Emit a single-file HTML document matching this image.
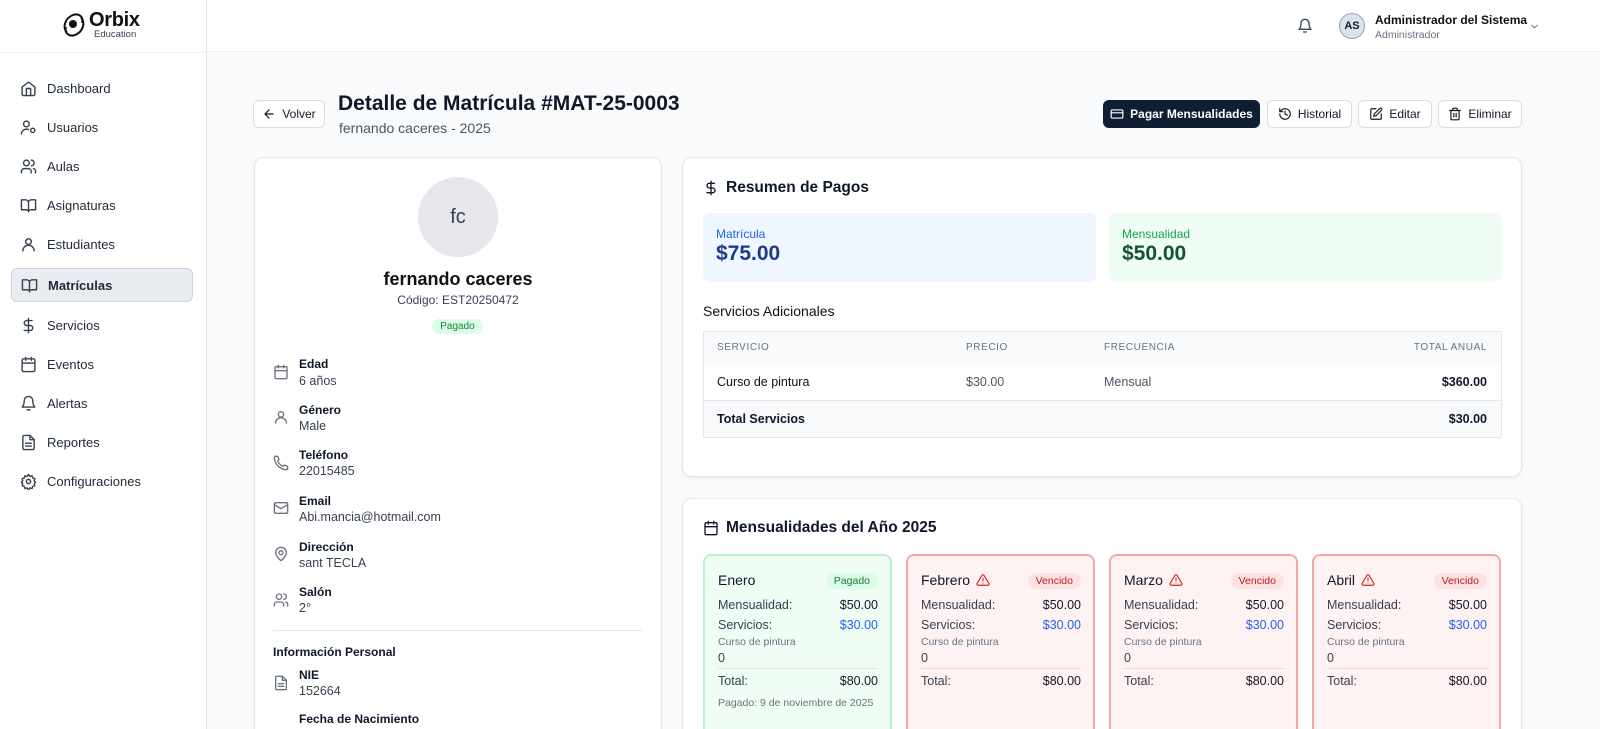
<!DOCTYPE html>
<html><head><meta charset="utf-8"><style>
*{box-sizing:border-box;margin:0;padding:0}
html{width:1600px;height:729px;overflow:hidden}
body{width:1600px;height:729px;overflow:hidden;background:#f8fafc;font-family:"Liberation Sans",Arial,sans-serif;color:#0f172a;position:relative}
.a{position:absolute}
svg.i{fill:none;stroke:currentColor;stroke-width:2;stroke-linecap:round;stroke-linejoin:round}
.side{left:0;top:0;width:207px;height:729px;background:#fff;border-right:1px solid #e5e7eb}
.nav{left:11px;width:182px;height:34px;display:flex;align-items:center;padding-left:9px;font-size:13px;color:#1f2937}
.nav svg{width:17px;height:17px;margin-right:10px;color:#374151}
.nav.act{background:#e9edf2;border:1px solid #cbd5e1;border-radius:6px;font-weight:bold}
.btn{height:28px;border:1px solid #d9dee5;border-radius:6px;background:#fff;display:flex;align-items:center;justify-content:center;font-size:12px;color:#111827;top:100px}
.btn svg{width:14px;height:14px;margin-right:6px}
.card{background:#fff;border:1px solid #e5e7eb;border-radius:10px;box-shadow:0 1px 3px rgba(0,0,0,.06)}
.lab{font-size:12px;font-weight:bold;left:299px}
.val{font-size:12.5px;color:#374151;left:299px}
.ic{left:273px;width:16px;height:16px;color:#6b7280}
.m{top:554px;width:189px;height:175px;border:2px solid #f3a8a8;border-bottom:none;background:#fef2f2;border-radius:8px 8px 0 0}
.m.g{border-color:#bbf0cd;background:#f0fdf4}
.m .t{position:absolute;left:13px;top:16px;font-size:14px;display:flex;align-items:center}
.m .t svg{width:14px;height:14px;color:#dc2626;margin-left:6px}
.bd{position:absolute;right:12px;top:17px;font-size:10.5px;padding:2px 8px;border-radius:9px;background:#fee2e2;color:#b91c1c}
.g .bd{background:#dcfce7;color:#15803d}
.r{position:absolute;left:13px;right:12px;font-size:12.5px;color:#374151;display:flex;justify-content:space-between}
.r b{color:#111827;font-weight:normal}
</style></head><body>
<div class="a side"></div>
<div class="a" style="left:207px;top:0;width:1393px;height:52px;background:#fff;border-bottom:1px solid #eceff3"></div>
<div class="a" style="left:0;top:52px;width:207px;height:1px;background:#eceff3"></div>
<svg class="a" style="left:61px;top:12px" width="26" height="26" viewBox="0 0 26 26" fill="none" stroke="#111" stroke-width="2"><path d="M6 20C1 16 4 6 12 3c6-2 11 2 9 8"/><path d="M20 6c5 4 2 14-6 17-6 2-11-2-9-8"/><circle cx="12" cy="12" r="3" fill="#111"/></svg>
<div class="a" style="left:89px;top:9px;font-size:20px;font-weight:bold;color:#111;letter-spacing:-.3px">Orbix</div>
<div class="a" style="left:94px;top:29px;font-size:9.5px;color:#374151">Education</div>
<div class="a nav" style="top:71px"><svg class="i" viewBox="0 0 24 24"><path d="M3 10l9-7 9 7v10a2 2 0 0 1-2 2H5a2 2 0 0 1-2-2z"/><path d="M9 22V12h6v10"/></svg>Dashboard</div>
<div class="a nav" style="top:110px"><svg class="i" viewBox="0 0 24 24"><circle cx="9" cy="7" r="4"/><path d="M2 21a7 7 0 0 1 10-6"/><circle cx="18" cy="16" r="3"/></svg>Usuarios</div>
<div class="a nav" style="top:149px"><svg class="i" viewBox="0 0 24 24"><circle cx="9" cy="7" r="4"/><path d="M2 21v-2a4 4 0 0 1 4-4h6a4 4 0 0 1 4 4v2"/><path d="M16 3a4 4 0 0 1 0 8M22 21v-2a4 4 0 0 0-3-4"/></svg>Aulas</div>
<div class="a nav" style="top:188px"><svg class="i" viewBox="0 0 24 24"><path d="M2 4h6a4 4 0 0 1 4 4v13a3 3 0 0 0-3-3H2zM22 4h-6a4 4 0 0 0-4 4v13a3 3 0 0 1 3-3h7z"/></svg>Asignaturas</div>
<div class="a nav" style="top:227px"><svg class="i" viewBox="0 0 24 24"><circle cx="12" cy="8" r="4"/><path d="M4 21a8 8 0 0 1 16 0"/></svg>Estudiantes</div>
<div class="a nav act" style="top:268px"><svg class="i" viewBox="0 0 24 24"><path d="M2 4h6a4 4 0 0 1 4 4v13a3 3 0 0 0-3-3H2zM22 4h-6a4 4 0 0 0-4 4v13a3 3 0 0 1 3-3h7z"/></svg>Matrículas</div>
<div class="a nav" style="top:308px"><svg class="i" viewBox="0 0 24 24"><path d="M12 2v20M17 5H9.5a3.5 3.5 0 0 0 0 7h5a3.5 3.5 0 0 1 0 7H6"/></svg>Servicios</div>
<div class="a nav" style="top:347px"><svg class="i" viewBox="0 0 24 24"><rect x="3" y="4" width="18" height="18" rx="2"/><path d="M16 2v4M8 2v4M3 10h18"/></svg>Eventos</div>
<div class="a nav" style="top:386px"><svg class="i" viewBox="0 0 24 24"><path d="M6 8a6 6 0 0 1 12 0c0 7 3 9 3 9H3s3-2 3-9M10 21h4"/></svg>Alertas</div>
<div class="a nav" style="top:425px"><svg class="i" viewBox="0 0 24 24"><path d="M14 2H6a2 2 0 0 0-2 2v16a2 2 0 0 0 2 2h12a2 2 0 0 0 2-2V8z"/><path d="M14 2v6h6M8 13h8M8 17h8"/></svg>Reportes</div>
<div class="a nav" style="top:464px"><svg class="i" viewBox="0 0 24 24"><circle cx="12" cy="12" r="3"/><path d="M12 2l2 3 3-1 1 3 3 1-1 3 2 2-2 2 1 3-3 1-1 3-3-1-2 3-2-3-3 1-1-3-3-1 1-3-2-2 2-2-1-3 3-1 1-3 3 1z"/></svg>Configuraciones</div>
<svg class="a i" style="left:1297px;top:18px;color:#374151" width="16" height="16" viewBox="0 0 24 24"><path d="M6 8a6 6 0 0 1 12 0c0 7 3 9 3 9H3s3-2 3-9M10 21h4"/></svg>
<div class="a" style="left:1339px;top:13px;width:26px;height:26px;border-radius:50%;background:#dbe2ec;border:1px solid #94a3b8;font-size:11px;font-weight:bold;display:flex;align-items:center;justify-content:center">AS</div>
<div class="a" style="left:1375px;top:13px;font-size:12px;font-weight:bold;color:#111">Administrador del Sistema</div>
<div class="a" style="left:1375px;top:29px;font-size:10.5px;color:#6b7280">Administrador</div>
<svg class="a i" style="left:1529px;top:21px;color:#6b7280" width="11" height="11" viewBox="0 0 24 24"><path d="M6 9l6 6 6-6"/></svg>
<div class="a btn" style="left:253px;width:72px"><svg class="i" viewBox="0 0 24 24"><path d="M19 12H5M12 19l-7-7 7-7"/></svg>Volver</div>
<div class="a" style="left:338px;top:92px;font-size:21px;font-weight:bold;color:#0f172a">Detalle de Matrícula #MAT-25-0003</div>
<div class="a" style="left:339px;top:120px;font-size:14px;color:#4b5563">fernando caceres - 2025</div>
<div class="a btn" style="left:1103px;width:157px;background:#0f1e33;border-color:#0f1e33;color:#fff;font-weight:bold"><svg class="i" viewBox="0 0 24 24"><rect x="2" y="5" width="20" height="14" rx="2"/><path d="M2 10h20"/></svg>Pagar Mensualidades</div>
<div class="a btn" style="left:1267px;width:85px"><svg class="i" viewBox="0 0 24 24"><path d="M3 12a9 9 0 1 0 3-6.7L3 8M3 3v5h5M12 7v5l4 2"/></svg>Historial</div>
<div class="a btn" style="left:1358px;width:74px"><svg class="i" viewBox="0 0 24 24"><path d="M12 3H5a2 2 0 0 0-2 2v14a2 2 0 0 0 2 2h14a2 2 0 0 0 2-2v-7"/><path d="M18.4 2.6a2 2 0 0 1 3 3L12 15l-4 1 1-4z"/></svg>Editar</div>
<div class="a btn" style="left:1438px;width:84px"><svg class="i" viewBox="0 0 24 24"><path d="M3 6h18M19 6v14a2 2 0 0 1-2 2H7a2 2 0 0 1-2-2V6M8 6V4a2 2 0 0 1 2-2h4a2 2 0 0 1 2 2v2M10 11v6M14 11v6"/></svg>Eliminar</div>
<div class="a card" style="left:254px;top:157px;width:408px;height:572px;border-bottom:none;border-radius:10px 10px 0 0"></div>
<div class="a" style="left:418px;top:177px;width:80px;height:80px;border-radius:50%;background:#e5e7eb;font-size:20px;color:#374151;display:flex;align-items:center;justify-content:center">fc</div>
<div class="a" style="left:254px;width:408px;top:269px;text-align:center;font-size:18px;font-weight:bold;color:#111">fernando caceres</div>
<div class="a" style="left:254px;width:408px;top:293px;text-align:center;font-size:12px;color:#374151">Código: EST20250472</div>
<div class="a" style="left:432px;top:319px;width:51px;height:15px;border-radius:8px;background:#dcfce7;color:#15803d;font-size:10px;text-align:center;line-height:15px">Pagado</div>
<svg class="a i ic" style="top:364px" viewBox="0 0 24 24"><rect x="3" y="4" width="18" height="18" rx="2"/><path d="M16 2v4M8 2v4M3 10h18"/></svg>
<div class="a lab" style="top:357px">Edad</div><div class="a val" style="top:374px">6 años</div>
<svg class="a i ic" style="top:409px" viewBox="0 0 24 24"><circle cx="12" cy="8" r="4"/><path d="M4 21a8 8 0 0 1 16 0"/></svg>
<div class="a lab" style="top:403px">Género</div><div class="a val" style="top:419px">Male</div>
<svg class="a i ic" style="top:455px" viewBox="0 0 24 24"><path d="M22 17v3a2 2 0 0 1-2 2A19 19 0 0 1 2 4a2 2 0 0 1 2-2h3l2 5-2 2a16 16 0 0 0 8 8l2-2 5 2z"/></svg>
<div class="a lab" style="top:448px">Teléfono</div><div class="a val" style="top:464px">22015485</div>
<svg class="a i ic" style="top:500px" viewBox="0 0 24 24"><rect x="2" y="4" width="20" height="16" rx="2"/><path d="M22 7l-10 6L2 7"/></svg>
<div class="a lab" style="top:494px">Email</div><div class="a val" style="top:510px">Abi.mancia@hotmail.com</div>
<svg class="a i ic" style="top:546px" viewBox="0 0 24 24"><path d="M20 10c0 6-8 12-8 12s-8-6-8-12a8 8 0 0 1 16 0z"/><circle cx="12" cy="10" r="3"/></svg>
<div class="a lab" style="top:540px">Dirección</div><div class="a val" style="top:556px">sant TECLA</div>
<svg class="a i ic" style="top:592px" viewBox="0 0 24 24"><circle cx="9" cy="7" r="4"/><path d="M2 21v-2a4 4 0 0 1 4-4h6a4 4 0 0 1 4 4v2M16 3a4 4 0 0 1 0 8M22 21v-2a4 4 0 0 0-3-4"/></svg>
<div class="a lab" style="top:585px">Salón</div><div class="a val" style="top:601px">2°</div>
<div class="a" style="left:273px;top:630px;width:369px;height:1px;background:#e5e7eb"></div>
<div class="a" style="left:273px;top:645px;font-size:12px;font-weight:bold">Información Personal</div>
<svg class="a i ic" style="top:675px" viewBox="0 0 24 24"><path d="M14 2H6a2 2 0 0 0-2 2v16a2 2 0 0 0 2 2h12a2 2 0 0 0 2-2V8z"/><path d="M14 2v6h6M8 13h8M8 17h8"/></svg>
<div class="a lab" style="top:668px">NIE</div><div class="a val" style="top:684px">152664</div>
<div class="a lab" style="top:712px">Fecha de Nacimiento</div>
<div class="a card" style="left:682px;top:157px;width:840px;height:320px"></div>
<svg class="a i" style="left:703px;top:180px" width="16" height="16" viewBox="0 0 24 24"><path d="M12 2v20M17 5H9.5a3.5 3.5 0 0 0 0 7h5a3.5 3.5 0 0 1 0 7H6"/></svg>
<div class="a" style="left:726px;top:179px;font-size:15.5px;font-weight:bold">Resumen de Pagos</div>
<div class="a" style="left:703px;top:213px;width:393px;height:69px;background:#eff6ff;border-radius:7px"></div>
<div class="a" style="left:716px;top:227px;font-size:12px;color:#2563eb">Matrícula</div>
<div class="a" style="left:716px;top:242px;font-size:21px;font-weight:bold;color:#1e3a8a">$75.00</div>
<div class="a" style="left:1109px;top:213px;width:393px;height:69px;background:#f0fdf4;border-radius:7px"></div>
<div class="a" style="left:1122px;top:227px;font-size:12px;color:#16a34a">Mensualidad</div>
<div class="a" style="left:1122px;top:242px;font-size:21px;font-weight:bold;color:#14532d">$50.00</div>
<div class="a" style="left:703px;top:303px;font-size:14px;color:#111">Servicios Adicionales</div>
<div class="a" style="left:703px;top:331px;width:799px;height:107px;border:1px solid #e5e7eb;background:#fff"></div>
<div class="a" style="left:704px;top:332px;width:797px;height:32px;background:#f8fafc"></div>
<div class="a" style="left:704px;top:400px;width:797px;height:37px;background:#f8fafc;border-top:1px solid #e5e7eb"></div>
<div class="a" style="left:717px;top:342px;font-size:10px;color:#6b7280;letter-spacing:.6px">SERVICIO</div>
<div class="a" style="left:966px;top:342px;font-size:10px;color:#6b7280;letter-spacing:.6px">PRECIO</div>
<div class="a" style="left:1104px;top:342px;font-size:10px;color:#6b7280;letter-spacing:.6px">FRECUENCIA</div>
<div class="a" style="right:113px;top:342px;font-size:10px;color:#6b7280;letter-spacing:.6px">TOTAL ANUAL</div>
<div class="a" style="left:717px;top:375px;font-size:12.5px;color:#111">Curso de pintura</div>
<div class="a" style="left:966px;top:375px;font-size:12.5px;color:#4b5563">$30.00</div>
<div class="a" style="left:1104px;top:375px;font-size:12.5px;color:#4b5563">Mensual</div>
<div class="a" style="right:113px;top:375px;font-size:12.5px;font-weight:bold">$360.00</div>
<div class="a" style="left:717px;top:412px;font-size:12.5px;font-weight:bold">Total Servicios</div>
<div class="a" style="right:113px;top:412px;font-size:12.5px;font-weight:bold">$30.00</div>
<div class="a card" style="left:682px;top:498px;width:840px;height:231px;border-bottom:none;border-radius:10px 10px 0 0"></div>
<svg class="a i" style="left:703px;top:520px" width="16" height="16" viewBox="0 0 24 24"><rect x="3" y="4" width="18" height="18" rx="2"/><path d="M16 2v4M8 2v4M3 10h18"/></svg>
<div class="a" style="left:726px;top:519px;font-size:15.5px;font-weight:bold">Mensualidades del Año 2025</div>
<div class="a m g" style="left:703px"><div class="t">Enero</div><div class="bd">Pagado</div>
<div class="r" style="top:42px">Mensualidad:<b>$50.00</b></div><div class="r" style="top:62px">Servicios:<b style="color:#2563eb">$30.00</b></div>
<div class="r" style="top:80px;font-size:10.5px;color:#6b7280">Curso de pintura</div><div class="r" style="top:95px">0</div>
<div class="r" style="top:112px;height:1px;background:#dde3e0"></div>
<div class="r" style="top:118px">Total:<b>$80.00</b></div>
<div class="r" style="top:141px;font-size:10.5px;color:#6b7280">Pagado: 9 de noviembre de 2025</div></div>
<div class="a m" style="left:906px"><div class="t">Febrero<svg class="i" viewBox="0 0 24 24"><path d="M10.3 3.9L1.8 18a2 2 0 0 0 1.7 3h17a2 2 0 0 0 1.7-3L13.7 3.9a2 2 0 0 0-3.4 0zM12 9v4M12 17h0"/></svg></div><div class="bd">Vencido</div>
<div class="r" style="top:42px">Mensualidad:<b>$50.00</b></div><div class="r" style="top:62px">Servicios:<b style="color:#2563eb">$30.00</b></div>
<div class="r" style="top:80px;font-size:10.5px;color:#6b7280">Curso de pintura</div><div class="r" style="top:95px">0</div>
<div class="r" style="top:112px;height:1px;background:#f0d6d6"></div>
<div class="r" style="top:118px">Total:<b>$80.00</b></div></div>
<div class="a m" style="left:1109px"><div class="t">Marzo<svg class="i" viewBox="0 0 24 24"><path d="M10.3 3.9L1.8 18a2 2 0 0 0 1.7 3h17a2 2 0 0 0 1.7-3L13.7 3.9a2 2 0 0 0-3.4 0zM12 9v4M12 17h0"/></svg></div><div class="bd">Vencido</div>
<div class="r" style="top:42px">Mensualidad:<b>$50.00</b></div><div class="r" style="top:62px">Servicios:<b style="color:#2563eb">$30.00</b></div>
<div class="r" style="top:80px;font-size:10.5px;color:#6b7280">Curso de pintura</div><div class="r" style="top:95px">0</div>
<div class="r" style="top:112px;height:1px;background:#f0d6d6"></div>
<div class="r" style="top:118px">Total:<b>$80.00</b></div></div>
<div class="a m" style="left:1312px"><div class="t">Abril<svg class="i" viewBox="0 0 24 24"><path d="M10.3 3.9L1.8 18a2 2 0 0 0 1.7 3h17a2 2 0 0 0 1.7-3L13.7 3.9a2 2 0 0 0-3.4 0zM12 9v4M12 17h0"/></svg></div><div class="bd">Vencido</div>
<div class="r" style="top:42px">Mensualidad:<b>$50.00</b></div><div class="r" style="top:62px">Servicios:<b style="color:#2563eb">$30.00</b></div>
<div class="r" style="top:80px;font-size:10.5px;color:#6b7280">Curso de pintura</div><div class="r" style="top:95px">0</div>
<div class="r" style="top:112px;height:1px;background:#f0d6d6"></div>
<div class="r" style="top:118px">Total:<b>$80.00</b></div></div>
</body></html>
